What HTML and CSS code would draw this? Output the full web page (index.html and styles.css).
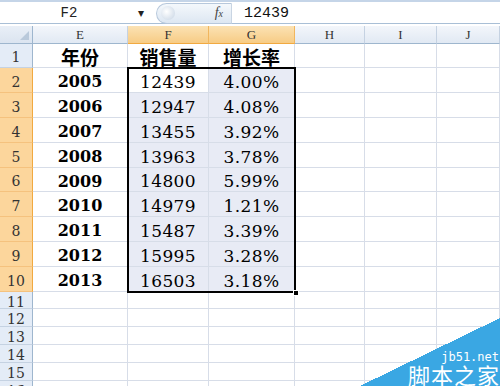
FILE: index.html
```html
<!DOCTYPE html>
<html lang="zh-CN">
<head>
  <meta charset="UTF-8" />
  <title>销售量 增长率</title>
  <link rel="stylesheet" href="styles.css">
</head>
<body>
  <div class="window">
    <div class="formula-bar">
      <div class="name-box">F2</div>
      <div class="name-arrow">&#9662;</div>
      <div class="fx-pill">
        <span class="grip"></span>
        <span class="fx"><i>f</i><small>x</small></span>
      </div>
      <div class="formula">12439</div>
    </div>

    <div class="sheet">
      <div class="corner"></div>
      <div class="col-head">E</div>
      <div class="col-head sel">F</div>
      <div class="col-head sel">G</div>
      <div class="col-head">H</div>
      <div class="col-head">I</div>
      <div class="col-head">J</div>

      <div class="row-head">1</div>
      <div class="cell title">年份</div><div class="cell title">销售量</div><div class="cell title">增长率</div><div class="cell"></div><div class="cell"></div><div class="cell"></div>

      <div class="row-head sel">2</div>
      <div class="cell year">2005</div><div class="cell num active">12439</div><div class="cell num pick">4.00%</div><div class="cell"></div><div class="cell"></div><div class="cell"></div>
      <div class="row-head sel">3</div>
      <div class="cell year">2006</div><div class="cell num pick">12947</div><div class="cell num pick">4.08%</div><div class="cell"></div><div class="cell"></div><div class="cell"></div>
      <div class="row-head sel">4</div>
      <div class="cell year">2007</div><div class="cell num pick">13455</div><div class="cell num pick">3.92%</div><div class="cell"></div><div class="cell"></div><div class="cell"></div>
      <div class="row-head sel">5</div>
      <div class="cell year">2008</div><div class="cell num pick">13963</div><div class="cell num pick">3.78%</div><div class="cell"></div><div class="cell"></div><div class="cell"></div>
      <div class="row-head sel">6</div>
      <div class="cell year">2009</div><div class="cell num pick">14800</div><div class="cell num pick">5.99%</div><div class="cell"></div><div class="cell"></div><div class="cell"></div>
      <div class="row-head sel">7</div>
      <div class="cell year">2010</div><div class="cell num pick">14979</div><div class="cell num pick">1.21%</div><div class="cell"></div><div class="cell"></div><div class="cell"></div>
      <div class="row-head sel">8</div>
      <div class="cell year">2011</div><div class="cell num pick">15487</div><div class="cell num pick">3.39%</div><div class="cell"></div><div class="cell"></div><div class="cell"></div>
      <div class="row-head sel">9</div>
      <div class="cell year">2012</div><div class="cell num pick">15995</div><div class="cell num pick">3.28%</div><div class="cell"></div><div class="cell"></div><div class="cell"></div>
      <div class="row-head sel">10</div>
      <div class="cell year">2013</div><div class="cell num pick">16503</div><div class="cell num pick">3.18%</div><div class="cell"></div><div class="cell"></div><div class="cell"></div>

      <div class="row-head">11</div>
      <div class="cell"></div><div class="cell"></div><div class="cell"></div><div class="cell"></div><div class="cell"></div><div class="cell"></div>
      <div class="row-head">12</div>
      <div class="cell"></div><div class="cell"></div><div class="cell"></div><div class="cell"></div><div class="cell"></div><div class="cell"></div>
      <div class="row-head">13</div>
      <div class="cell"></div><div class="cell"></div><div class="cell"></div><div class="cell"></div><div class="cell"></div><div class="cell"></div>
      <div class="row-head">14</div>
      <div class="cell"></div><div class="cell"></div><div class="cell"></div><div class="cell"></div><div class="cell"></div><div class="cell"></div>
      <div class="row-head">15</div>
      <div class="cell"></div><div class="cell"></div><div class="cell"></div><div class="cell"></div><div class="cell"></div><div class="cell"></div>
      <div class="row-head">16</div>
      <div class="cell"></div><div class="cell"></div><div class="cell"></div><div class="cell"></div><div class="cell"></div><div class="cell"></div>

      <!-- selection box over F2:G10 -->
      <div class="selection"><span class="handle"></span></div>
    </div>

    <div class="watermark">
      <div class="wm-site">jb51.net</div>
      <div class="wm-name">脚本之家</div>
    </div>
  </div>
</body>
</html>
```

FILE: styles.css
```css
* {
  box-sizing: border-box;
}
body, html {
  margin: 0;
  padding: 0;
  background: #fff;
}

.window {
  position: relative;
  width: 500px;
  height: 386px;
  overflow: hidden;
  font-family: "DejaVu Serif", "Noto Sans CJK SC", serif;
  color: #000;
}

/* formula bar */
.formula-bar {
  display: flex;
  align-items: center;
  height: 26px;
  border-top: 2px solid #c5d5e8;
  border-bottom: 2px solid #fff;
  box-shadow: inset 0 -1px 0 #a9bfd6;
  background: #fff;
}

.name-box {
  width: 138px;
  text-align: center;
  font-family: "Liberation Mono", monospace;
  font-size: 14px;
  color: #222;
}

.name-arrow {
  width: 18px;
  font-size: 12px;
  color: #222;
}

.fx-pill {
  display: flex;
  align-items: center;
  justify-content: space-between;
  width: 76px;
  height: 21px;
  padding: 0 8px 0 4px;
  border: 1px solid #b7c8dc;
  border-right: 1px solid #c9d5e3;
  border-radius: 11px 0 0 11px;
  background: linear-gradient(#f4f8fc, #dde7f2);
}

.grip {
  width: 14px;
  height: 14px;
  border-radius: 50%;
  background: radial-gradient(circle at 40% 40%, #fff, #c5d3e3);
}

.fx {
  font-family: "Liberation Serif", serif;
  font-size: 14px;
  color: #444;
}

.fx small {
  font-size: 10px;
  font-style: italic;
}

.formula {
  padding-left: 12px;
  font-family: "Liberation Mono", monospace;
  font-size: 15px;
  color: #111;
}

/* sheet grid */
.sheet {
  position: relative;
  display: grid;
  grid-template-columns: 33px 95px 81px 86px 70px 72px 63px;
  grid-template-rows: 18px 24px 25px 25px 25px 25px 24px 25px 25px 25px 25px 17px 18px 18px 18px 18px 18px;
}

.corner {
  position: relative;
  border-right: 1px solid #9eb6ce;
  border-bottom: 1px solid #9eb6ce;
  background: linear-gradient(#e9eff7, #dbe4f0);
}

.corner::after {
  content: "";
  position: absolute;
  right: 3px;
  bottom: 3px;
  border-left: 9px solid transparent;
  border-bottom: 9px solid #b9c9db;
}

.col-head {
  display: flex;
  align-items: center;
  justify-content: center;
  border-right: 1px solid #c5d2e2;
  border-bottom: 1px solid #9eb6ce;
  background: linear-gradient(#f3f6fb, #e1e9f3);
  font-family: "Liberation Serif", serif;
  font-size: 13px;
  color: #333;
}

.col-head.sel {
  background: linear-gradient(#fbe2b4, #f7cc85);
  border-right-color: #f1b65e;
  border-bottom-color: #f1a940;
}

.row-head {
  display: flex;
  align-items: center;
  justify-content: center;
  padding-top: 3px;
  border-right: 1px solid #9eb6ce;
  border-bottom: 1px solid #c5d2e2;
  background: #e4ecf7;
  font-size: 14px;
  color: #333;
}

.row-head.sel {
  background: #fcd69c;
  border-right-color: #f1a940;
  border-bottom-color: #f5c27e;
}

.cell {
  display: flex;
  align-items: center;
  justify-content: center;
  border-right: 1px solid #d7dde8;
  border-bottom: 1px solid #d7dde8;
}

.title {
  padding-top: 2px;
  font-family: "Noto Sans CJK SC", sans-serif;
  font-size: 19px;
  font-weight: bold;
}

.year {
  padding-top: 3px;
  font-size: 16px;
  font-weight: bold;
}

.num {
  padding-top: 3px;
  font-size: 17px;
  letter-spacing: 0.4px;
}

.pick {
  background: #e8ebf5;
}

.active {
  background: #fff;
}

.selection {
  position: absolute;
  left: 127px;
  top: 41px;
  width: 169px;
  height: 226px;
  border: 2px solid #000;
  pointer-events: none;
}

.handle {
  position: absolute;
  right: -5px;
  bottom: -5px;
  width: 6px;
  height: 6px;
  background: #000;
  border: 1px solid #fff;
}

/* watermark */
.watermark {
  position: absolute;
  right: 0;
  bottom: 0;
  display: flex;
  flex-direction: column;
  justify-content: flex-end;
  align-items: flex-end;
  width: 140px;
  height: 68px;
  background: linear-gradient(to top left, #3aa7e3 50%, transparent 50%);
  color: #fff;
}

.wm-site {
  padding-right: 1px;
  font-family: "DejaVu Sans Mono", monospace;
  font-size: 12px;
  line-height: 12px;
}

.wm-name {
  font-family: "Noto Sans CJK SC", sans-serif;
  font-size: 22px;
  line-height: 23px;
  letter-spacing: 1px;
}
```
